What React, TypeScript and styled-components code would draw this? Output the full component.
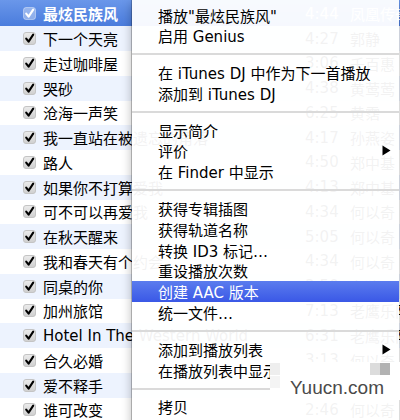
import { FC } from 'react';
import styled, { createGlobalStyle } from 'styled-components';

const GlobalStyle = createGlobalStyle`
  html, body {
    margin: 0;
    padding: 0;
    background: #fff;
    overflow: hidden;
  }
  body {
    font-family: "DejaVu Sans", "Noto Sans CJK SC", sans-serif;
  }
`;

type Song = { title: string; time: string; artist: string };

const songs: Song[] = [
  { title: '最炫民族风', time: '4:44', artist: '凤凰传奇' },
  { title: '下一个天亮', time: '4:27', artist: '郭静' },
  { title: '走过咖啡屋', time: '3:06', artist: '千百惠' },
  { title: '哭砂', time: '4:38', artist: '黄莺莺' },
  { title: '沧海一声笑', time: '6:25', artist: '黄霑' },
  { title: '我一直站在被遗忘的角落', time: '4:17', artist: '孙燕姿' },
  { title: '路人', time: '4:50', artist: '郑中基' },
  { title: '如果你不打算爱我', time: '4:13', artist: '郑中基' },
  { title: '可不可以再爱我', time: '4:34', artist: '何以奇' },
  { title: '在秋天醒来', time: '5:05', artist: '何以奇' },
  { title: '我和春天有个约会', time: '4:34', artist: '何以奇' },
  { title: '同桌的你', time: '3:50', artist: '老狼' },
  { title: '加州旅馆', time: '7:13', artist: '老鹰乐队' },
  { title: 'Hotel In The Western World', time: '6:31', artist: '老鹰乐队' },
  { title: '合久必婚', time: '3:13', artist: '何以奇' },
  { title: '爱不释手', time: '4:05', artist: '何以奇' },
  { title: '谁可改变', time: '2:46', artist: '何以奇' },
];

type Entry =
  | { kind: 'item'; label: string; sub?: boolean; active?: boolean }
  | { kind: 'sep' };

const menu: Entry[] = [
  { kind: 'item', label: '播放"最炫民族风"' },
  { kind: 'item', label: '启用 Genius' },
  { kind: 'sep' },
  { kind: 'item', label: '在 iTunes DJ 中作为下一首播放' },
  { kind: 'item', label: '添加到 iTunes DJ' },
  { kind: 'sep' },
  { kind: 'item', label: '显示简介' },
  { kind: 'item', label: '评价', sub: true },
  { kind: 'item', label: '在 Finder 中显示' },
  { kind: 'sep' },
  { kind: 'item', label: '获得专辑插图' },
  { kind: 'item', label: '获得轨道名称' },
  { kind: 'item', label: '转换 ID3 标记…' },
  { kind: 'item', label: '重设播放次数' },
  { kind: 'item', label: '创建 AAC 版本', active: true },
  { kind: 'item', label: '统一文件…' },
  { kind: 'sep' },
  { kind: 'item', label: '添加到播放列表', sub: true },
  { kind: 'item', label: '在播放列表中显示' },
  { kind: 'sep' },
  { kind: 'item', label: '拷贝' },
];

const Check: FC<{ selected: boolean }> = ({ selected }) => (
  <svg width="13" height="13" viewBox="0 0 13 13">
    <defs>
      <linearGradient id="cb" x1="0" y1="0" x2="0" y2="1">
        <stop offset="0" stopColor="#ececec" />
        <stop offset="1" stopColor="#cfcfcf" />
      </linearGradient>
    </defs>
    <rect
      x="0.5"
      y="0.5"
      width="12"
      height="12"
      rx="2.5"
      fill={selected ? 'rgba(255,255,255,0.35)' : 'url(#cb)'}
      stroke={selected ? 'rgba(255,255,255,0.4)' : '#c4c4c4'}
    />
    <path
      d="M3.2 6.6 L5.6 9.6 L10.2 2.6"
      fill="none"
      stroke={selected ? '#fff' : '#000'}
      strokeWidth="2.1"
      strokeLinecap="round"
      strokeLinejoin="round"
    />
  </svg>
);

const Arrow: FC = () => (
  <svg width="9" height="11" viewBox="0 0 9 11">
    <path d="M0.5 0.5 L8.5 5.5 L0.5 10.5 Z" fill="#000" />
  </svg>
);

export default function App() {
  return (
    <>
      <GlobalStyle />
      <Screen>
        <List>
          {songs.map((s, i) => (
            <Row key={s.title} $index={i} $selected={i === 0}>
              <BoxCell>
                <Check selected={i === 0} />
              </BoxCell>
              <TitleCell $selected={i === 0}>{s.title}</TitleCell>
              <TimeCell>{s.time}</TimeCell>
              <ArtistCell>{s.artist}</ArtistCell>
            </Row>
          ))}
        </List>
        <Menu>
          {menu.map((e, i) =>
            e.kind === 'sep' ? (
              <Separator key={i} />
            ) : (
              <MenuItem key={i} $active={!!e.active}>
                <span>{e.label}</span>
                {e.sub && <Arrow />}
              </MenuItem>
            ),
          )}
        </Menu>
        <Watermark>
          <Pixel $x={0} $y={1} $c="#eeeeee" />
          <Pixel $x={0} $y={14} $c="#f4f4f4" />
          <Pixel $x={100} $y={1} $c="#dcdcdc" />
          <Pixel $x={110} $y={1} $c="#b2b2b2" />
          <WatermarkText>Yuucn.com</WatermarkText>
        </Watermark>
      </Screen>
    </>
  );
}

const Screen = styled.div`
  position: relative;
  width: 400px;
  height: 420px;
  overflow: hidden;
`;

const List = styled.div`
  display: flex;
  flex-direction: column;
`;

const Row = styled.div<{ $index: number; $selected: boolean }>`
  box-sizing: border-box;
  flex: none;
  height: 24.75px;
  display: flex;
  align-items: center;
  font-size: 15px;
  color: ${(p) => (p.$selected ? '#fff' : '#000')};
  background: ${(p) =>
    p.$selected
      ? 'linear-gradient(#6a97ea, #4a7cdd)'
      : p.$index % 2 === 1
        ? '#edf3fe'
        : '#fff'};
  &:first-child {
    height: 26.35px;
    padding-top: 1.6px;
  }
`;

const BoxCell = styled.div`
  width: 43px;
  flex: none;
  display: flex;
  justify-content: flex-start;
  padding-left: 23px;
  box-sizing: border-box;
  svg {
    display: block;
  }
`;

const TitleCell = styled.div<{ $selected: boolean }>`
  width: 262px;
  flex: none;
  white-space: nowrap;
  overflow: hidden;
  font-weight: ${(p) => (p.$selected ? 700 : 400)};
`;

const TimeCell = styled.div`
  width: 45px;
  flex: none;
`;

const ArtistCell = styled.div`
  flex: 1;
  white-space: nowrap;
  overflow: hidden;
`;

const Menu = styled.div`
  position: absolute;
  left: 132px;
  top: 0;
  right: 1px;
  bottom: -20px;
  padding-top: 4.6px;
  background: rgba(255, 255, 255, 0.95);
  box-shadow:
    -1px 0 0 rgba(0, 0, 0, 0.22),
    0 3px 10px rgba(0, 0, 0, 0.3);
  font-size: 15px;
  color: #000;
`;

const MenuItem = styled.div<{ $active: boolean }>`
  height: 20.8px;
  display: flex;
  align-items: center;
  justify-content: space-between;
  padding: 0 8px 0 26px;
  white-space: nowrap;
  color: ${(p) => (p.$active ? '#fff' : '#000')};
  background: ${(p) => (p.$active ? 'linear-gradient(#5b7cee, #3a58e6)' : 'transparent')};
`;

const Separator = styled.div`
  height: 16px;
  display: flex;
  align-items: center;
  &::after {
    content: '';
    flex: 1;
    height: 2px;
    background: #dadada;
  }
`;

const Watermark = styled.div`
  position: absolute;
  left: 270px;
  top: 362px;
  width: 130px;
  height: 38px;
  background: #fff;
  display: flex;
  align-items: center;
  padding-left: 20px;
  box-sizing: border-box;
`;

const Pixel = styled.div<{ $x: number; $y: number; $c: string }>`
  position: absolute;
  left: ${(p) => p.$x}px;
  top: ${(p) => p.$y}px;
  width: 10px;
  height: 12px;
  background: ${(p) => p.$c};
`;

const WatermarkText = styled.span`
  position: relative;
  margin-top: 14px;
  font-family: "Liberation Sans", Arial, sans-serif;
  font-size: 19px;
  color: #4a4a4a;
`;
